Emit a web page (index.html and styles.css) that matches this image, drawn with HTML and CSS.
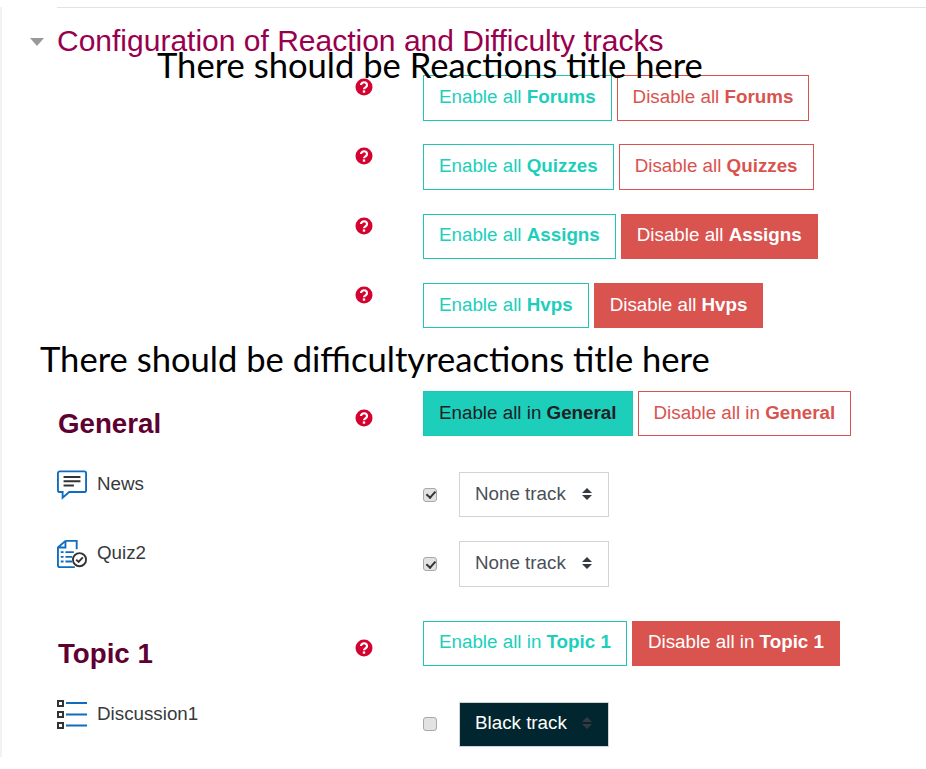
FILE: index.html
```html
<!DOCTYPE html>
<html>
<head>
    <link rel="stylesheet" href="styles.css">
</head>
<body>
    <div class="page">
        <hr class="rule">

        <!-- Section heading -->
        <div class="section-head">
            <span class="caret"></span>
            <h2>Configuration of Reaction and Difficulty tracks</h2>
            <div class="note note-over">There should be Reactions title here</div>
        </div>

        <!-- Reaction rows -->
        <div class="track-rows">
            <div class="row">
                <div class="label"></div>
                <svg class="help" viewBox="0 0 18 18"><use href="#help-icon"/></svg>
                <div class="controls">
                    <button class="btn enable">Enable all <b>Forums</b></button>
                    <button class="btn disable">Disable all <b>Forums</b></button>
                </div>
            </div>
            <div class="row">
                <div class="label"></div>
                <svg class="help" viewBox="0 0 18 18"><use href="#help-icon"/></svg>
                <div class="controls">
                    <button class="btn enable">Enable all <b>Quizzes</b></button>
                    <button class="btn disable">Disable all <b>Quizzes</b></button>
                </div>
            </div>
            <div class="row">
                <div class="label"></div>
                <svg class="help" viewBox="0 0 18 18"><use href="#help-icon"/></svg>
                <div class="controls">
                    <button class="btn enable">Enable all <b>Assigns</b></button>
                    <button class="btn disable on">Disable all <b>Assigns</b></button>
                </div>
            </div>
            <div class="row">
                <div class="label"></div>
                <svg class="help" viewBox="0 0 18 18"><use href="#help-icon"/></svg>
                <div class="controls">
                    <button class="btn enable">Enable all <b>Hvps</b></button>
                    <button class="btn disable on">Disable all <b>Hvps</b></button>
                </div>
            </div>
        </div>

        <div class="note note-flow">There should be difficultyreactions title here</div>

        <!-- General -->
        <div class="row group-row">
            <h3 class="label">General</h3>
            <svg class="help" viewBox="0 0 18 18"><use href="#help-icon"/></svg>
            <div class="controls">
                <button class="btn enable on">Enable all in <b>General</b></button>
                <button class="btn disable">Disable all in <b>General</b></button>
            </div>
        </div>
        <div class="row item-row">
            <div class="label item-name">
                <svg class="mod" viewBox="0 0 32 32" fill="none" stroke="#0f6cbf" stroke-width="2">
                    <path d="M3 1.500h26a2 2 0 0 1 2 2v18a2 2 0 0 1-2 2H13l-7 6v-6H3a2 2 0 0 1-2-2v-18a2 2 0 0 1 2-2z"/>
                    <path d="M7 7.500h18M7 12h18M7 16.500h11" stroke="#333"/>
                </svg>
                <span>News</span>
            </div>
            <div class="controls track-pick">
                <input type="checkbox" checked>
                <div class="track-select"><span>None track</span><span class="arrows"></span></div>
            </div>
        </div>
        <div class="row item-row">
            <div class="label item-name">
                <svg class="mod" viewBox="0 0 32 30" fill="none" stroke="#0f6cbf" stroke-width="2">
                    <path d="M9 1h12v9M9 1L1 8v19a2 2 0 0 0 2 2h16M9 1v7H1"/>
                    <path d="M4 13h3M4 18h3M4 23h3M9 13h9M9 18h7M9 23h7" stroke-width="2"/>
                    <circle cx="24" cy="21" r="7" fill="#fff" stroke="#333"/>
                    <path d="M20.500 21l2.500 2.500 4.500-5" stroke="#333"/>
                </svg>
                <span>Quiz2</span>
            </div>
            <div class="controls track-pick">
                <input type="checkbox" checked>
                <div class="track-select"><span>None track</span><span class="arrows"></span></div>
            </div>
        </div>

        <!-- Topic 1 -->
        <div class="row group-row topic-row">
            <h3 class="label">Topic 1</h3>
            <svg class="help" viewBox="0 0 18 18"><use href="#help-icon"/></svg>
            <div class="controls">
                <button class="btn enable">Enable all in <b>Topic 1</b></button>
                <button class="btn disable on">Disable all in <b>Topic 1</b></button>
            </div>
        </div>
        <div class="row item-row">
            <div class="label item-name">
                <svg class="mod" viewBox="0 0 30 30" fill="none" stroke="#0f6cbf" stroke-width="2">
                    <path d="M9 3h21M9 14.500h21M9 25.500h21"/>
                    <path d="M1 1h5v5H1zM1 12h5v5H1zM1 23h5v5H1z" stroke="#333" stroke-width="2"/>
                </svg>
                <span>Discussion1</span>
            </div>
            <div class="controls track-pick">
                <input type="checkbox">
                <div class="track-select black"><span>Black track</span><span class="arrows"></span></div>
            </div>
        </div>
    </div>

    <svg class="defs" width="0" height="0">
        <symbol id="help-icon" viewBox="0 0 18 18">
            <circle cx="9" cy="9" r="8.500" fill="#d4022e"/>
            <path d="M6 7a3 2.700 0 1 1 4.700 2.200C9.700 9.900 9 10.300 9 11.300" fill="none" stroke="#fff" stroke-width="2.200"/>
            <rect x="7.800" y="12.400" width="2.400" height="2.300" fill="#fff"/>
        </symbol>
    </svg>
</body>
</html>
```

FILE: styles.css
```css
body {
    font-family: "Liberation Sans", Arial, sans-serif;
    background: white;
    margin: 0;
    color: #373a3c;
}
.page {
    border-left: 2px solid #f2f2f2;
    padding-left: 55px;
}
.rule {
    border: none;
    border-top: 1px solid #e3e3e3;
    margin: 7px 0 0;
}
.section-head {
    position: relative;
    height: 67px;
}
.caret {
    position: absolute;
    left: -27px;
    top: 30px;
    border-top: 8px solid #999;
    border-left: 7.500px solid transparent;
    border-right: 7.500px solid transparent;
}
.section-head h2 {
    margin: 0;
    padding-top: 15px;
    font-size: 30px;
    line-height: 35px;
    font-weight: normal;
    color: #98004d;
    white-space: nowrap;
}
.note {
    font-family: Lato, "Open Sans", sans-serif;
    font-size: 34.600px;
    line-height: 42px;
    color: #000;
    white-space: nowrap;
}
.note-over {
    position: absolute;
    left: 100px;
    top: 36px;
}
.note-flow {
    margin-left: -17px;
    height: 53px;
}
.row {
    display: flex;
    align-items: flex-start;
}
.track-rows .row {
    height: 69.330px;
}
.track-rows .row:last-child {
    height: 55px;
}
.label {
    width: 298px;
    flex: none;
    margin: 0;
}
.help {
    width: 18px;
    height: 18px;
    flex: none;
    margin-top: 3px;
}
.controls {
    margin-left: 50px;
    display: flex;
    gap: 5px;
}
.btn {
    font-family: inherit;
    font-size: 18.800px;
    height: 45.500px;
    padding: 0 15px 2px;
    background: white;
    border: 1px solid;
    border-radius: 0;
    white-space: nowrap;
}
.enable {
    color: #1dcfbb;
    border-color: #1fc6b4;
}
.enable.on {
    background: #1dcfbb;
    color: #1d2125;
}
.disable {
    color: #d9534f;
    border-color: #d9534f;
}
.disable.on {
    background: #d9534f;
    color: white;
}
.group-row {
    height: 79px;
}
.group-row .label {
    box-sizing: border-box;
    font-size: 27.700px;
    line-height: 32px;
    font-weight: bold;
    color: #5f0032;
    padding: 17px 0 0 1px;
}
.group-row .help {
    margin-top: 18px;
}
.topic-row {
    margin-top: 12px;
}
.item-row {
    height: 69.330px;
}
.item-row:last-child {
    height: auto;
    padding-bottom: 10px;
}
.item-name {
    display: flex;
    align-items: flex-start;
    gap: 10px;
    font-size: 18.800px;
    line-height: 28px;
}
.track-pick {
    margin: 2px 0 0 68px;
    align-items: center;
    gap: 22px;
}
.track-pick input {
    appearance: none;
    position: relative;
    box-sizing: border-box;
    width: 14px;
    height: 14px;
    margin: 0;
    background: #e2e2e2;
    border: 1px solid #a9a9a9;
    border-radius: 3px;
}
.track-pick input:checked::after {
    content: "";
    position: absolute;
    left: 3.500px;
    top: 0.500px;
    width: 3.500px;
    height: 7px;
    border: solid #333;
    border-width: 0 2px 2px 0;
    transform: rotate(42deg);
}
.mod {
    width: 30px;
    height: 30px;
    flex: none;
}
.track-select {
    width: 150px;
    height: 45.500px;
    box-sizing: border-box;
    border: 1px solid #ced4da;
    padding: 0 15px 2px;
    display: flex;
    align-items: center;
    justify-content: space-between;
    font-size: 18.800px;
    color: #495057;
}
.track-select.black {
    background: #01262f;
    color: white;
}
.arrows {
    width: 10px;
    height: 12px;
    position: relative;
    margin-right: 1px;
}
.arrows::before,
.arrows::after {
    content: "";
    position: absolute;
    left: 0;
    border-left: 5px solid transparent;
    border-right: 5px solid transparent;
}
.arrows::before {
    top: 0;
    border-bottom: 5px solid #343a40;
}
.arrows::after {
    bottom: 0;
    border-top: 5px solid #343a40;
}
.defs {
    position: absolute;
}
```
